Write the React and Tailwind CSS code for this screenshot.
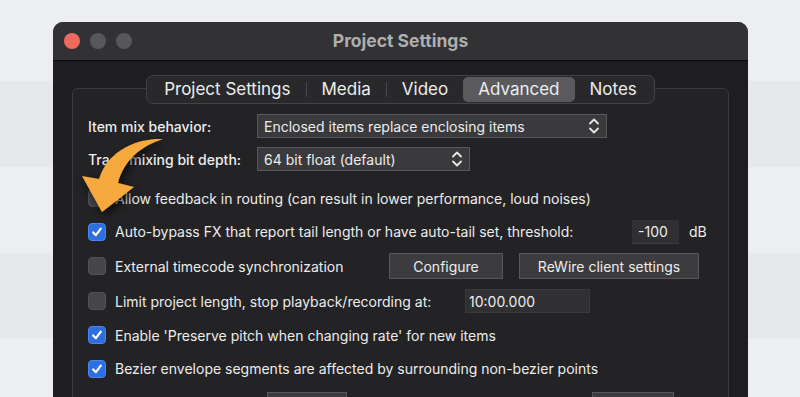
import React from 'react';

const font = { fontFamily: 'Inter, "Noto Sans", sans-serif' };

const Chevrons = () => (
    <svg width="12" height="18" viewBox="0 0 12 18" fill="none" stroke="#e6e6e6" strokeWidth="1.8" strokeLinecap="round" strokeLinejoin="round">
        <path d="M2 6.5 L6 2.5 L10 6.5" />
        <path d="M2 11.5 L6 15.5 L10 11.5" />
    </svg>
);

const Select = ({ value, width }) => (
    <div
        className="h-[24px] flex items-center justify-between pl-[6px] pr-[6px] bg-[#3a3a3c] border border-[#58585b] text-[14px] text-[#ececec]"
        style={{ width }}
    >
        <span>{value}</span>
        <Chevrons />
    </div>
);

const Checkbox = ({ checked }) =>
    checked ? (
        <div className="w-[18px] h-[18px] rounded-[4px] bg-[#2d6fe0] border border-[#4b86ea] flex items-center justify-center shrink-0">
            <svg width="12" height="12" viewBox="0 0 12 12" fill="none" stroke="#fff" strokeWidth="2.2" strokeLinecap="round" strokeLinejoin="round">
                <path d="M2.2 6.4 L4.9 9.2 L9.8 2.6" />
            </svg>
        </div>
    ) : (
        <div className="w-[18px] h-[18px] rounded-[4px] bg-[#464649] border border-[#535356] shrink-0" />
    );

const Button = ({ children, w }) => (
    <div
        className="h-[26px] flex items-center justify-center bg-[#3c3c3e] border border-[#58585b] text-[14px] text-[#ececec]"
        style={{ width: w }}
    >
        {children}
    </div>
);

const CheckRow = ({ checked, h, className = '', children }) => (
    <div className={'flex items-center gap-[9px] ' + className} style={{ height: h }}>
        <Checkbox checked={checked} />
        {children}
    </div>
);

const tabs = ['Project Settings', 'Media', 'Video', 'Advanced', 'Notes'];

export default function App() {
    return (
        <div
            className="w-[800px] h-[397px] overflow-hidden relative bg-[linear-gradient(to_bottom,#edeef0_0_81px,#e7e8ea_81px_167px,#edeef0_167px_253px,#e7e8ea_253px_338px,#edeef0_338px)]"
            style={font}
        >
            <div className="ml-[53px] mt-[22px] w-[695px] h-[375px] rounded-t-[10px] overflow-hidden bg-[#1e1e20] flex flex-col">
                {/* title bar */}
                <div className="h-[39px] shrink-0 bg-[#323234] border-b border-[#0c0c0d] grid grid-cols-[1fr_auto_1fr] items-center">
                    <div className="flex items-center gap-[10px] pl-[11px]">
                        <div className="w-[16px] h-[16px] rounded-full bg-[#ee6a5f]" />
                        <div className="w-[16px] h-[16px] rounded-full bg-[#58585a]" />
                        <div className="w-[16px] h-[16px] rounded-full bg-[#58585a]" />
                    </div>
                    <div className="text-[17.5px] font-bold text-[#aeaeb0]">Project Settings</div>
                    <div />
                </div>

                <div className="px-[19px] pt-[14px] flex flex-col">
                    {/* tabs */}
                    <div className="flex justify-center relative z-10">
                        <div className="h-[29px] flex items-center px-[2px] rounded-[7px] bg-[#29292b] border border-[#434346] text-[17px] text-[#ededed]">
                            {tabs.map((t, i) => (
                                <React.Fragment key={t}>
                                    {i > 0 && t !== 'Advanced' && tabs[i - 1] !== 'Advanced' && (
                                        <div className="w-px h-[15px] bg-[#48484b]" />
                                    )}
                                    <div
                                        className={
                                            t === 'Advanced'
                                                ? 'h-[25px] px-[15px] flex items-center rounded-[5px] bg-[#5a5a5d]'
                                                : 'h-[25px] px-[15px] flex items-center'
                                        }
                                    >
                                        {t}
                                    </div>
                                </React.Fragment>
                            ))}
                        </div>
                    </div>

                    {/* group box */}
                    <div className="-mt-[16px] h-[320px] rounded-[6px] bg-[#232325] border border-[#3a3a3d] pt-[25px] pl-[15px] text-[14px] text-[#ececec]">
                        <div className="flex items-center h-[24px]">
                            <span className="w-[169px] font-medium">Item mix behavior:</span>
                            <Select value="Enclosed items replace enclosing items" width={350} />
                        </div>
                        <div className="flex items-center h-[24px] mt-[9px]">
                            <span className="w-[169px] font-medium">Track mixing bit depth:</span>
                            <Select value="64 bit float (default)" width={213} />
                        </div>
                        <CheckRow h={34} checked={false} className="mt-[10px]">
                            <span>Allow feedback in routing (can result in lower performance, loud noises)</span>
                        </CheckRow>
                        <CheckRow h={33} checked>
                            <span className="w-[508px]">Auto-bypass FX that report tail length or have auto-tail set, threshold:</span>
                            <div className="w-[47px] h-[24px] bg-[#303032] border-b border-[#3e3e40] flex items-center pl-[6px]">-100</div>
                            <span className="ml-[1px]">dB</span>
                        </CheckRow>
                        <CheckRow h={36} checked={false}>
                            <span className="w-[265px]">External timecode synchronization</span>
                            <div className="flex gap-[16px]">
                                <Button w={114}>Configure</Button>
                                <Button w={180}>ReWire client settings</Button>
                            </div>
                        </CheckRow>
                        <CheckRow h={34} checked={false}>
                            <span className="w-[341px]">Limit project length, stop playback/recording at:</span>
                            <div className="w-[125px] h-[24px] bg-[#303032] border border-[#3a3a3c] flex items-center pl-[3px]">10:00.000</div>
                        </CheckRow>
                        <CheckRow h={34} checked>
                            <span>Enable 'Preserve pitch when changing rate' for new items</span>
                        </CheckRow>
                        <CheckRow h={33} checked>
                            <span>Bezier envelope segments are affected by surrounding non-bezier points</span>
                        </CheckRow>
                        <div className="flex mt-[7px]">
                            <div className="ml-[179px] w-[80px] h-[20px] bg-[#3c3c3e] border border-[#58585b]" />
                            <div className="ml-[245px] w-[82px] h-[20px] bg-[#3c3c3e] border border-[#58585b]" />
                        </div>
                    </div>
                </div>
            </div>

            {/* highlight arrow */}
            <svg className="absolute left-0 top-0 pointer-events-none" width="800" height="397" viewBox="0 0 800 397">
                <defs>
                    <filter id="sh" x="-50%" y="-50%" width="200%" height="200%">
                        <feDropShadow dx="2" dy="4" stdDeviation="5" floodColor="#000" floodOpacity="0.7" />
                    </filter>
                </defs>
                <path
                    d="M163 139 C140 138 109 148 99 179 L82 176 L102 212 L134 187 L118 183 C124 160 141 146 163 139 Z"
                    fill="#f6aa3c"
                    filter="url(#sh)"
                />
            </svg>
        </div>
    );
}
